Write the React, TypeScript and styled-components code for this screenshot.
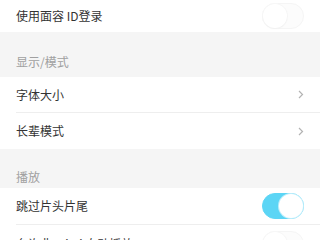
import React from "react";
import styled, { createGlobalStyle } from "styled-components";

const Global = createGlobalStyle`
  html, body { margin: 0; padding: 0; background: #f5f5f5; }
  body { font-family: "Noto Sans CJK SC", "Noto Sans", sans-serif; -webkit-font-smoothing: antialiased; }
`;

const Page = styled.div`
  width: 320px;
  height: 240px;
  overflow: hidden;
  background: #f5f5f5;
  display: flex;
  flex-direction: column;
`;

const Row = styled.div<{ $h: number }>`
  height: ${(p) => p.$h}px;
  flex: none;
  background: #ffffff;
  padding-left: 16px;
  box-sizing: border-box;
  display: flex;
`;

const RowInner = styled.div<{ $line?: boolean }>`
  flex: 1;
  display: flex;
  align-items: center;
  justify-content: space-between;
  padding-right: 16px;
  box-sizing: border-box;
  border-bottom: ${(p) => (p.$line ? "1px solid #eeeeee" : "none")};
`;

const Label = styled.span`
  font-size: 12px;
  line-height: 14px;
  color: #333333;
`;

const Header = styled.div<{ $h: number; $pb: number }>`
  height: ${(p) => p.$h}px;
  flex: none;
  padding: 0 16px ${(p) => p.$pb}px;
  box-sizing: border-box;
  display: flex;
  align-items: flex-end;
  font-size: 12px;
  line-height: 14px;
  color: #a0a0a0;
`;

const Track = styled.div<{ $on: boolean }>`
  width: 42px;
  height: 26px;
  border-radius: 13px;
  box-sizing: border-box;
  position: relative;
  flex: none;
  background: ${(p) => (p.$on ? "#5cd5f5" : "#fcfcfc")};
  border: 1px solid ${(p) => (p.$on ? "#5cd5f5" : "#f5f5f5")};
`;

const Knob = styled.div<{ $on: boolean }>`
  position: absolute;
  top: 0;
  left: ${(p) => (p.$on ? "16px" : "0")};
  width: 24px;
  height: 24px;
  border-radius: 50%;
  background: #ffffff;
  box-shadow: ${(p) =>
    p.$on ? "0 0 0 1px #bfeefb" : "0 1px 2px rgba(0,0,0,0.03), 0 0 0 1px #f7f7f7"};
`;

const Toggle = ({ on }: { on: boolean }) => (
  <Track $on={on}>
    <Knob $on={on} />
  </Track>
);

const Chevron = () => (
  <svg width="6" height="9" viewBox="0 0 6 9">
    <path d="M1 1 L4.5 4.5 L1 8" fill="none" stroke="#b3b3b3" strokeWidth="1.2" />
  </svg>
);

export default function App() {
  return (
    <Page>
      <Global />
      <Row $h={32}>
        <RowInner>
          <Label>使用面容 ID登录</Label>
          <Toggle on={false} />
        </RowInner>
      </Row>
      <Header $h={45} $pb={8}>显示/模式</Header>
      <Row $h={36}>
        <RowInner $line>
          <Label>字体大小</Label>
          <Chevron />
        </RowInner>
      </Row>
      <Row $h={36}>
        <RowInner>
          <Label>长辈模式</Label>
          <Chevron />
        </RowInner>
      </Row>
      <Header $h={39} $pb={4}>播放</Header>
      <Row $h={37}>
        <RowInner $line>
          <Label>跳过片头片尾</Label>
          <Toggle on={true} />
        </RowInner>
      </Row>
      <Row $h={37}>
        <RowInner>
          <Label>允许非 Wi-Fi 自动播放</Label>
          <Toggle on={false} />
        </RowInner>
      </Row>
    </Page>
  );
}
